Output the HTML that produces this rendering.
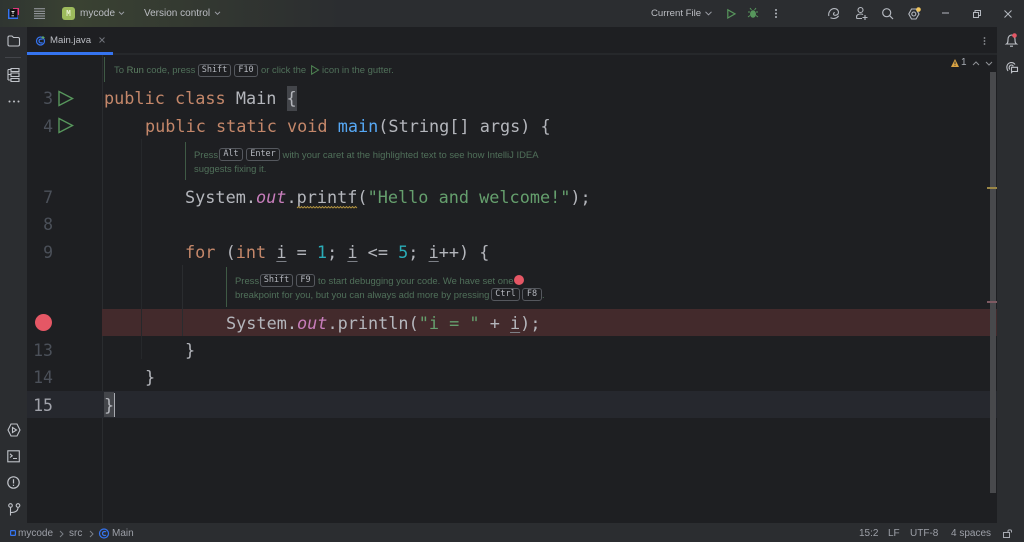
<!DOCTYPE html>
<html><head><meta charset="utf-8"><style>
html,body{margin:0;padding:0;background:#1e1f22}
#r{position:relative;width:1024px;height:542px;overflow:hidden;background:#1e1f22;font-family:"Liberation Sans",sans-serif}
.a{position:absolute}
.c{position:absolute;font:16.85px/27px "DejaVu Sans Mono",monospace;color:#b4b6bc;white-space:pre;height:27px}
.k{color:#c4876a}.f{color:#56a8f5}.s{color:#659f6d}.n{color:#2aacb8}.o{color:#c77dbb;font-style:italic}
.u{text-decoration:underline;text-underline-offset:3px;text-decoration-thickness:1px;text-decoration-color:#7d8087}
.ln{position:absolute;left:26px;width:27px;text-align:right;font:16.5px/27px "DejaVu Sans Mono",monospace;color:#4b5059}
.h{position:absolute;margin-top:1px;font-size:9.45px;line-height:14px;color:#50705a;white-space:pre}
.kb{position:absolute;box-sizing:border-box;height:13px;text-align:center;font:8.5px/11px "DejaVu Sans Mono",monospace;color:#b4b7be;border:1px solid #55585e;border-radius:3px}
.t{position:absolute;font-size:10px;line-height:14px;color:#bcbec4;white-space:pre}
.sb{position:absolute;font-size:10px;line-height:14px;color:#9da0a8;white-space:pre}
svg{position:absolute;overflow:visible;fill:none}
</style></head><body><div id="r">
<div class="a" style="left:0;top:0;width:1024px;height:27px;background:#2b2d30"></div>
<div class="a" style="left:0;top:0;width:340px;height:27px;background:linear-gradient(90deg,#2f3531 0,#3a4232 22%,#2b2d30 100%)"></div>
<div class="a" style="left:0;top:27px;width:27px;height:496px;background:#2b2d30"></div>
<div class="a" style="left:997px;top:27px;width:27px;height:496px;background:#2b2d30"></div>
<div class="a" style="left:0;top:523px;width:1024px;height:19px;background:#2b2d30"></div>
<div class="a" style="left:27px;top:53px;width:970px;height:2px;background:#26282b"></div>
<div class="a" style="left:27px;top:52px;width:86px;height:2.500px;background:#3574f0"></div>
<div class="a" style="left:102px;top:55px;width:1px;height:468px;background:#2a2c2f"></div>
<div class="a" style="left:27px;top:391px;width:970px;height:27px;background:#26282e"></div>
<div class="a" style="left:102px;top:309px;width:895px;height:27px;background:#432a2c"></div>
<div class="a" style="left:141px;top:139px;width:1px;height:220px;background:#26282b"></div>
<div class="a" style="left:182px;top:265px;width:1px;height:71px;background:#2a2c2f"></div>
<div class="a" style="left:104px;top:57px;width:1px;height:25px;background:#3f5a45"></div>
<div class="a" style="left:185px;top:142px;width:1px;height:38px;background:#3f5a45"></div>
<div class="a" style="left:226px;top:267px;width:1px;height:40px;background:#3f5a45"></div>
<div class="a" style="left:990px;top:72px;width:6px;height:421px;background:#48494c"></div>
<div class="a" style="left:987px;top:187px;width:10px;height:2px;background:#9b8746"></div>
<div class="a" style="left:987px;top:301px;width:10px;height:2px;background:#7e5a62"></div>

<svg style="left:8px;top:8px" width="11" height="11"><rect x="0" y="1" width="10" height="10" fill="#3574f0"/><path d="M5 0H11V7H5Z" fill="#e0377d"/><rect x="1.500" y="1" width="8" height="8.500" fill="#111"/><path d="M3.500 3.500H6.500M5 3.200V6M3.500 7.800H6" stroke="#ddd" stroke-width=".9"/></svg>
<svg style="left:34px;top:8px" width="11" height="11" stroke="#9da0a6" stroke-width="1"><path d="M0 .8H11M0 3.200H11M0 5.600H11M0 8H11M0 10.400H11"/></svg>
<div class="a" style="left:62px;top:7px;width:13px;height:13px;border-radius:3px;background:#9dbb5c;color:#e4eecb;font:bold 7.500px/13px 'DejaVu Sans Mono',monospace;text-align:center">M</div>
<div class="t" style="left:80px;top:6.500px">mycode</div>
<svg style="left:118px;top:11px" width="7" height="5" stroke="#9da0a8"><path d="M1 .8L3.500 3.300L6 .8"/></svg>
<div class="t" style="left:144px;top:6.500px">Version control</div>
<svg style="left:214px;top:11px" width="7" height="5" stroke="#9da0a8"><path d="M1 .8L3.500 3.300L6 .8"/></svg>

<div class="t" style="left:651px;top:6.500px;font-size:9.600px">Current File</div>
<svg style="left:705px;top:11px" width="7" height="5" stroke="#9da0a8"><path d="M.5 .8L3.500 3.800L6.500 .8"/></svg>
<svg style="left:727px;top:9px" width="9" height="10" stroke="#57965c" stroke-width="1.200"><path d="M.8 .8V9L8 4.900Z"/></svg>
<svg style="left:748px;top:8px" width="10" height="10" fill="#57965c"><ellipse cx="5" cy="6" rx="3" ry="3.800" fill="#57965c"/><path d="M0 4H2M8 4H10M0 9L2 7.500M10 9L8 7.500M2 0L3.500 2M8 0L6.500 2" stroke="#57965c"/></svg>
<svg style="left:774px;top:9px" width="4" height="9"><circle cx="2" cy="1" r="1" fill="#b4b8bf"/><circle cx="2" cy="4.500" r="1" fill="#b4b8bf"/><circle cx="2" cy="8" r="1" fill="#b4b8bf"/></svg>
<svg style="left:828px;top:8px" width="11" height="11" stroke="#b4b8bf" stroke-width="1.100"><path d="M.8 8C0 4 3 .6 6.300 .6C9 .6 10.800 2.500 10.400 5C10 7 7.500 7.800 6 7C5 6.200 5.400 4.800 6.800 4.600M2.500 9.800C5.500 11.200 9 10.400 10.600 7.800"/></svg>
<svg style="left:856px;top:7px" width="12" height="13" stroke="#b4b8bf" stroke-width="1.100"><circle cx="4.500" cy="3" r="2.500"/><path d="M.6 11.500V9.500C.6 8 2.500 7 4.500 7C5.500 7 6.500 7.200 7 7.600M.6 11.500H6M9 8V13M6.500 10.500H11.500"/></svg>
<svg style="left:882px;top:8px" width="11" height="11" stroke="#b4b8bf" stroke-width="1.200"><circle cx="4.700" cy="4.700" r="4"/><path d="M7.700 7.700L11 11"/></svg>
<svg style="left:908px;top:7px" width="13" height="13" stroke="#b4b8bf" stroke-width="1.100"><path d="M3.500 2H8L11 7L8 12H3.500L.8 7Z"/><circle cx="5.800" cy="7" r="2"/><circle cx="10.500" cy="2.500" r="2.300" fill="#f2c55c" stroke="none"/></svg>
<svg style="left:942px;top:12px" width="8" height="2" stroke="#b4b8bf"><path d="M0 1H7"/></svg>
<svg style="left:973px;top:10px" width="8" height="8" stroke="#b4b8bf"><path d="M.5 2.500H5.500V7.500H.5ZM2 2.500V.5H7.500V5.500H5.500"/></svg>
<svg style="left:1004px;top:10px" width="8" height="8" stroke="#b4b8bf"><path d="M.5 .5L7.500 7.500M7.500 .5L.5 7.500"/></svg>

<svg style="left:7px;top:35px" width="13" height="12" stroke="#c0c3c9" stroke-width="1.100"><path d="M1 2.500C1 1.500 1.500 1 2.500 1H5L6.500 2.500H11C12 2.500 12.500 3 12.500 4V9.500C12.500 10.500 12 11 11 11H2.500C1.500 11 1 10.500 1 9.500Z"/></svg>
<div class="a" style="left:5px;top:57px;width:16px;height:1px;background:#43454a"></div>
<svg style="left:7px;top:68px" width="13" height="14" stroke="#c0c3c9" stroke-width="1.100"><path d="M1 1.500H4M1 1.500V12M1 6.500H4M1 12H4M4 .5H12V3.500H4ZM4 5H12V8.500H4ZM4 10.500H12V13.500H4Z"/></svg>
<svg style="left:8px;top:100px" width="12" height="3"><circle cx="1.500" cy="1.500" r="1" fill="#c0c3c9"/><circle cx="6" cy="1.500" r="1" fill="#c0c3c9"/><circle cx="10.500" cy="1.500" r="1" fill="#c0c3c9"/></svg>
<svg style="left:7px;top:423px" width="14" height="14" stroke="#c0c3c9" stroke-width="1.100"><path d="M4 1H10L13 7L10 13H4L1 7Z"/><path d="M5.500 4.500V9.500L9.500 7Z"/></svg>
<svg style="left:7px;top:450px" width="14" height="13" stroke="#c0c3c9" stroke-width="1.100"><rect x=".8" y=".8" width="11.500" height="11"/><path d="M3 3.800L5.200 5.800L3 7.500M6 8.500H10"/></svg>
<svg style="left:7px;top:476px" width="14" height="14" stroke="#c0c3c9" stroke-width="1.200"><circle cx="6.500" cy="6.500" r="5.700"/><path d="M6.500 3.200V7.500M6.500 8.800V10"/></svg>
<svg style="left:8px;top:503px" width="14" height="14" stroke="#c0c3c9" stroke-width="1.100"><circle cx="2.500" cy="2.500" r="1.800"/><circle cx="10" cy="2.500" r="1.800"/><path d="M2.500 4.500V12.500M2.500 9.500C6 9.500 10 8.500 10 4.500"/></svg>

<svg style="left:1006px;top:33px" width="12" height="14" stroke="#c0c3c9" stroke-width="1.100"><path d="M.5 11C2 10 2 8.500 2 6.500C2 3.500 3.800 2 5.500 2C7.200 2 9 3.500 9 6.500C9 8.500 9 10 10.500 11ZM4 13.200H7"/><circle cx="8.500" cy="2.500" r="2.300" fill="#e55765" stroke="none"/></svg>
<svg style="left:1006px;top:62px" width="12" height="11" stroke="#c0c3c9" stroke-width="1.100"><path d="M2 9C0 6 .5 1.500 4.500 .6C6.500 .3 8 1 9 2.500M3.800 7.500C2.500 5.800 3.300 3 5.500 3C6.300 3 7 3.500 7.300 4.300M5.500 5.300H11.500V9.500H6.500L5.500 10.500Z"/></svg>

<svg style="left:36px;top:36px" width="10" height="10" stroke="#3574f0" stroke-width="1.200"><circle cx="4.500" cy="5" r="4"/><path d="M6.500 3.500C5.500 2.600 3 3 3 5S5.500 7.400 6.500 6.500"/><path d="M7 0V3M5.500 1.500H8.500" stroke="#5fa864" stroke-width="1"/></svg>
<div class="t" style="left:50px;top:34px;font-size:9.600px">Main.java</div>
<svg style="left:99px;top:37px" width="6" height="6" stroke="#6f737a"><path d="M.5 .5L5.500 5.500M5.500 .5L.5 5.500"/></svg>
<svg style="left:983px;top:37px" width="3" height="8"><circle cx="1.500" cy="1" r=".9" fill="#8f9297"/><circle cx="1.500" cy="4" r=".9" fill="#8f9297"/><circle cx="1.500" cy="7" r=".9" fill="#8f9297"/></svg>

<svg style="left:951px;top:59px" width="8" height="8"><path d="M4 0L8 8H0Z" fill="#d9a343"/><path d="M4 2.500V5M4 5.800V6.800" stroke="#2b2d30"/></svg>
<div class="sb" style="left:961px;top:56px;font-size:10px;color:#a8adb5">1</div>
<svg style="left:972px;top:61px" width="8" height="5" stroke="#8f9297"><path d="M1 4L4 1L7 4"/></svg>
<svg style="left:985px;top:61px" width="8" height="5" stroke="#8f9297"><path d="M1 1L4 4L7 1"/></svg>

<div class="ln" style="top:85px">3</div>
<div class="ln" style="top:113px">4</div>
<div class="ln" style="top:184px">7</div>
<div class="ln" style="top:211px">8</div>
<div class="ln" style="top:239px">9</div>
<div class="ln" style="top:337px">13</div>
<div class="ln" style="top:364px">14</div>
<div class="ln" style="top:392px;color:#a1a3ab">15</div>
<svg style="left:58px;top:90px" width="16" height="17" stroke="#57965c" stroke-width="1.400"><path d="M1 1.500V15.500L14.500 8.500Z"/></svg>
<svg style="left:58px;top:117px" width="16" height="17" stroke="#57965c" stroke-width="1.400"><path d="M1 1.500V15.500L14.500 8.500Z"/></svg>
<div class="a" style="left:35px;top:314px;width:17px;height:17px;border-radius:50%;background:#e55765"></div>

<div class="h" style="left:114px;top:63px">To <span style="color:#5c7f62">Run</span> code, press</div>
<div class="kb" style="left:198px;top:64px;width:33px">Shift</div>
<div class="kb" style="left:234px;top:64px;width:24px">F10</div>
<div class="h" style="left:261px;top:63px">or click the</div>
<svg style="left:311px;top:65px" width="8" height="10" stroke="#4f8553"><path d="M.6 .8V9.200L7.500 5Z"/></svg>
<div class="h" style="left:322px;top:63px">icon in the gutter.</div>

<div class="a" style="left:287px;top:86px;width:10px;height:25px;background:#43454a"></div>
<div class="c" style="left:104px;top:85px"><span class="k">public class</span> Main {</div>
<div class="c" style="left:145px;top:113px"><span class="k">public static void</span> <span class="f">main</span>(String[] args) {</div>

<div class="h" style="left:194px;top:148px">Press</div>
<div class="kb" style="left:219px;top:148px;width:24px">Alt</div>
<div class="kb" style="left:246px;top:148px;width:34px">Enter</div>
<div class="h" style="left:282.500px;top:148px">with your caret at the highlighted text to see how IntelliJ IDEA</div>
<div class="h" style="left:194px;top:162px">suggests fixing it.</div>

<div class="c" style="left:185px;top:184px">System.<span class="o">out</span>.printf(<span class="s">"Hello and welcome!"</span>);</div>
<svg style="left:297px;top:205.500px" width="61" height="3"><path d="M0 2L1.500 .5L3 2L4.500 .5L6 2L7.500 .5L9 2L10.500 .5L12 2L13.500 .5L15 2L16.500 .5L18 2L19.500 .5L21 2L22.500 .5L24 2L25.500 .5L27 2L28.500 .5L30 2L31.500 .5L33 2L34.500 .5L36 2L37.500 .5L39 2L40.500 .5L42 2L43.500 .5L45 2L46.500 .5L48 2L49.500 .5L51 2L52.500 .5L54 2L55.500 .5L57 2L58.500 .5L60 2" stroke="#b3933f" stroke-width=".9"/></svg>
<div class="c" style="left:185px;top:239px"><span class="k">for</span> (<span class="k">int</span> <span class="u">i</span> = <span class="n">1</span>; <span class="u">i</span> &lt;= <span class="n">5</span>; <span class="u">i</span>++) {</div>

<div class="h" style="left:235px;top:274px">Press</div>
<div class="kb" style="left:260px;top:274px;width:33px">Shift</div>
<div class="kb" style="left:296px;top:274px;width:19px">F9</div>
<div class="h" style="left:318px;top:274px">to start debugging your code. We have set one</div>
<div class="a" style="left:514px;top:275px;width:10px;height:10px;border-radius:50%;background:#e55765"></div>
<div class="h" style="left:235px;top:288px">breakpoint for you, but you can always add more by pressing</div>
<div class="kb" style="left:491px;top:288px;width:29px">Ctrl</div>
<div class="kb" style="left:522px;top:288px;width:20px">F8</div>
<div class="h" style="left:542px;top:288px">.</div>

<div class="c" style="left:226px;top:310px">System.<span class="o">out</span>.println(<span class="s">"i = "</span> + <span class="u">i</span>);</div>
<div class="c" style="left:185px;top:337px">}</div>
<div class="c" style="left:145px;top:364px">}</div>
<div class="a" style="left:104px;top:392px;width:10px;height:25px;background:#43454a"></div>
<div class="c" style="left:104px;top:392px">}</div>
<div class="a" style="left:114px;top:393px;width:1px;height:24px;background:#a8aab0"></div>

<svg style="left:10px;top:530px" width="6" height="6" stroke="#3574f0" stroke-width="1.200"><rect x=".6" y=".6" width="4.800" height="4.800" rx=".5"/></svg>
<div class="sb" style="left:18px;top:527px">mycode</div>
<svg style="left:59px;top:530px" width="5" height="8" stroke="#7a7e85"><path d="M1 1L4 4L1 7"/></svg>
<div class="sb" style="left:69px;top:527px">src</div>
<svg style="left:89px;top:530px" width="5" height="8" stroke="#7a7e85"><path d="M1 1L4 4L1 7"/></svg>
<svg style="left:99px;top:528px" width="11" height="11" stroke="#3574f0" stroke-width="1.200"><circle cx="5" cy="5.500" r="4.500"/><path d="M7 4C6 3 3.500 3.500 3.500 5.500S6 8 7 7"/></svg>
<div class="sb" style="left:112px;top:527px">Main</div>
<div class="sb" style="left:859px;top:527px">15:2</div>
<div class="sb" style="left:888px;top:527px">LF</div>
<div class="sb" style="left:910px;top:527px">UTF-8</div>
<div class="sb" style="left:951px;top:527px">4 spaces</div>
<svg style="left:1003px;top:529px" width="10" height="9" stroke="#a8abb2"><rect x=".5" y="3.500" width="6" height="5"/><path d="M5 3.500V2C5 .5 8.500 .5 8.500 2V3.500"/></svg>
</div></body></html>
